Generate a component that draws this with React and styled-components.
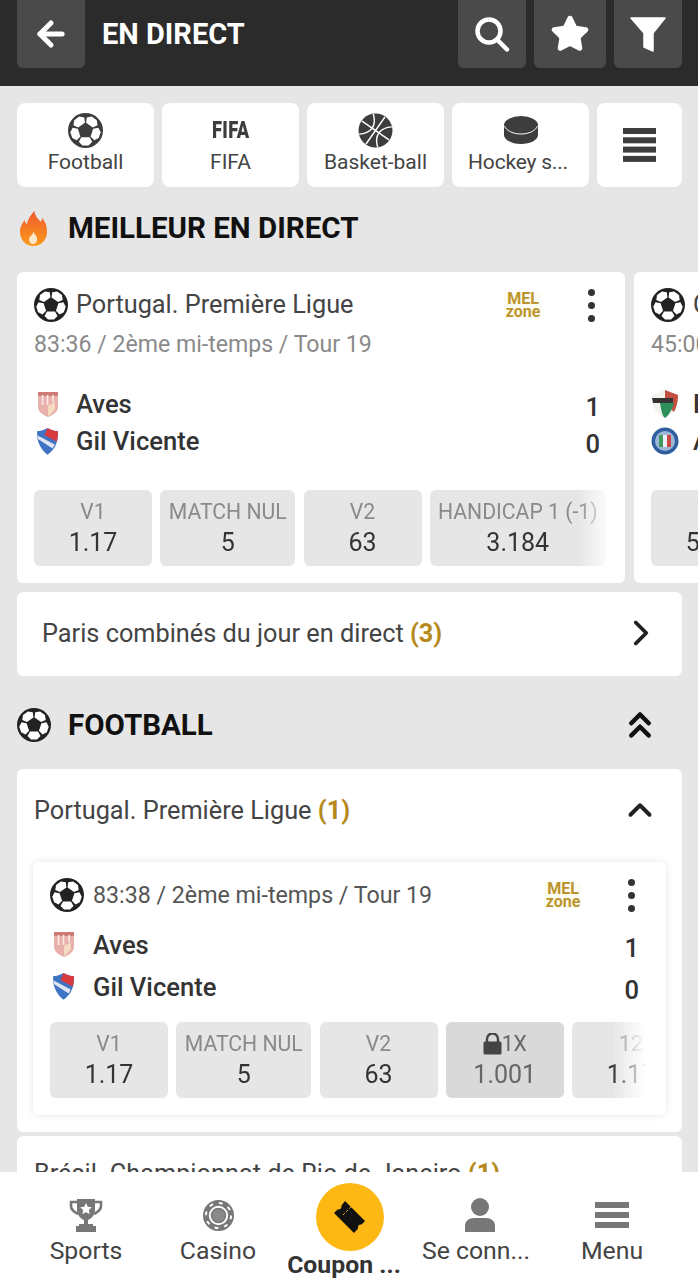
import React from 'react'
import styled, { createGlobalStyle } from 'styled-components'
import { ArrowLeft, Star, ChevronRight, ChevronUp, ChevronsUp } from 'lucide-react'

const GlobalStyle = createGlobalStyle`
	html, body {
		margin: 0;
		padding: 0;
		height: 100%;
		overflow: hidden;
		background: #e6e6e6;
		font-family: Roboto, "Liberation Sans", sans-serif;
	}
	* { box-sizing: border-box; }
`

const Page = styled.div`
	display: flex;
	flex-direction: column;
	height: 1280px;
	width: 698px;
	overflow: hidden;
`

const Header = styled.header`
	flex: none;
	height: 86px;
	background: #2b2b2b;
	display: flex;
	padding: 0 16px 18px 17px;
	gap: 8px;
	color: #fff;
`

const HeaderButton = styled.div`
	width: ${p => p.$w}px;
	height: 68px;
	background: #4a4a4a;
	border-radius: 0 0 6px 6px;
	display: flex;
	align-items: center;
	justify-content: center;
	flex: none;
`

const HeaderTitle = styled.h1`
	flex: 1;
	margin: 0 0 0 9px;
	font-size: 29px;
	font-weight: 700;
	line-height: 68px;
`

const Content = styled.main`
	flex: 1;
	min-height: 0;
	overflow: hidden;
	padding: 17px 16px 0 17px;
`

const SportTabs = styled.div`
	display: flex;
	gap: 8px;
`

const SportTab = styled.div`
	width: ${p => p.$w || 137}px;
	height: 84px;
	background: #fff;
	border-radius: 8px;
	display: flex;
	flex-direction: column;
	align-items: center;
	justify-content: ${p => p.$center ? 'center' : 'flex-start'};
	padding-top: ${p => p.$center ? 0 : 9}px;
	color: #444;
	font-size: 21px;
	flex: none;
`

const TabIcon = styled.div`
	height: 36px;
	display: flex;
	align-items: center;
	justify-content: center;
`

const TabLabel = styled.span`
	margin-top: 1px;
	line-height: 26px;
	padding-right: ${p => p.$nudge || 0}px;
	letter-spacing: ${p => p.$tight ? '-0.2px' : 'normal'};
`

const FifaMark = styled.span`
	font-size: 24px;
	font-weight: 900;
	letter-spacing: 0.5px;
	color: #3d3d3d;
	transform: scaleX(0.76);
`

const SectionRow = styled.div`
	display: flex;
	align-items: center;
	height: 34px;
	margin: ${p => p.$m};
	color: #111;
`

const SectionIcon = styled.div`
	width: 51px;
	padding-left: ${p => p.$pl || 0}px;
	display: flex;
	align-items: center;
`

const SectionTitle = styled.h2`
	flex: 1;
	margin: 0;
	font-size: 29.5px;
	font-weight: 700;
`

const CollapseIcon = styled.div`
	width: 84px;
	display: flex;
	justify-content: center;
	color: #111;
`

const Carousel = styled.div`
	display: flex;
	gap: 9px;
	margin: 27px -16px 0 0;
	overflow: hidden;
`

const LiveCard = styled.article`
	flex: none;
	width: 608px;
	height: 311px;
	background: #fff;
	border-radius: 6px;
	padding: 16px 17px;
	display: flex;
	flex-direction: column;
`

const LeagueLine = styled.div`
	display: flex;
	align-items: center;
	gap: ${p => p.$gap || 8}px;
	height: 34px;
`

const LeagueName = styled.span`
	flex: 1;
	margin-top: -2px;
	font-size: 25.3px;
	color: #444;
	white-space: nowrap;
`

const MatchTime = styled.div`
	margin-top: 8px;
	font-size: 23.1px;
	line-height: 30px;
	color: #8a8a8a;
	white-space: nowrap;
`

const MelBadge = styled.div`
	width: 38px;
	text-align: center;
	font-size: 16px;
	font-weight: 700;
	line-height: 13px;
	color: #bb952c;
	background: #fdfcf3;
	margin-right: ${p => p.$mr}px;
`

const Dots = styled.div`
	display: flex;
	flex-direction: column;
	gap: 6px;
	align-items: center;
	width: 8px;
	margin-right: ${p => p.$mr}px;
	i {
		width: 7px;
		height: 7px;
		border-radius: 50%;
		background: #333;
	}
`

const TeamRows = styled.div`
	display: flex;
	flex-direction: column;
	gap: ${p => p.$gap}px;
	margin-top: ${p => p.$top}px;
`

const TeamRow = styled.div`
	display: flex;
	align-items: center;
	height: ${p => p.$h}px;
	font-size: 25.6px;
	font-weight: 500;
	color: #333;
`

const Crest = styled.div`
	width: ${p => p.$w}px;
	padding-left: ${p => p.$pl ?? 2}px;
	display: flex;
	align-items: center;
`

const TeamName = styled.span`
	flex: 1;
	white-space: nowrap;
`

const Score = styled.span`
	position: relative;
	top: 3px;
	margin-right: ${p => p.$mr}px;
`

const OddsRow = styled.div`
	display: flex;
	gap: 8.25px;
	margin-top: ${p => p.$top}px;
	margin-right: ${p => p.$mr}px;
	overflow: hidden;
	-webkit-mask-image: linear-gradient(to right, #000 calc(100% - 34px), transparent);
	mask-image: linear-gradient(to right, #000 calc(100% - 34px), transparent);
`

const OddBox = styled.div`
	flex: none;
	width: ${p => p.$w}px;
	height: 76px;
	border-radius: 6px;
	background: ${p => p.$locked ? '#d9d9d9' : '#e6e6e6'};
	display: flex;
	flex-direction: column;
	align-items: center;
	justify-content: center;
	padding-bottom: 2px;
	white-space: nowrap;
`

const OddLabel = styled.span`
	display: flex;
	align-items: center;
	font-size: 21.2px;
	line-height: 30px;
	color: ${p => p.$locked ? '#666' : '#8a8a8a'};
`

const OddValue = styled.span`
	font-size: 25px;
	line-height: 31px;
	color: ${p => p.$locked ? '#666' : '#333'};
`

const LinkRow = styled.div`
	display: flex;
	align-items: center;
	justify-content: space-between;
	height: 84px;
	margin-top: 9px;
	padding: 0 20px 2px 25px;
	background: #fff;
	border-radius: 6px;
	font-size: 25.3px;
	color: #444;
`

const Count = styled.b`
	color: #b5891a;
	font-weight: 700;
`

const LeaguePanel = styled.section`
	margin-top: 27px;
	height: 363px;
	background: #fff;
	border-radius: 6px;
	padding: 0 16px;
`

const LeagueHead = styled.div`
	display: flex;
	align-items: center;
	justify-content: space-between;
	height: 82px;
	padding: 0 7px 0 1px;
	font-size: 25.3px;
	color: #444;
`

const MatchCard = styled.article`
	height: 253px;
	margin-top: 11px;
	border-radius: 6px;
	background: #fff;
	box-shadow: 0 0 8px rgba(0, 0, 0, 0.1);
	padding: 16px 17px;
`

const MatchClock = styled.span`
	flex: 1;
	font-size: 23.2px;
	color: #555;
	white-space: nowrap;
`

const NextPanel = styled.section`
	margin-top: 4px;
	height: 120px;
	background: #fff;
	border-radius: 6px;
	padding: 23px 17px;
	font-size: 25.3px;
	color: #444;
	white-space: nowrap;
`

const BottomNav = styled.nav`
	flex: none;
	height: 108px;
	background: #fff;
	display: flex;
	padding: 0 12px;
`

const NavItem = styled.div`
	flex: none;
	width: ${p => p.$w}px;
	display: flex;
	flex-direction: column;
	align-items: center;
	padding-top: 25px;
	font-size: 24.8px;
	color: #444;
	white-space: nowrap;
`

const NavIcon = styled.div`
	height: 36px;
	display: flex;
	align-items: center;
	justify-content: center;
`

const NavLabel = styled.span`
	margin-top: 0;
	line-height: 36px;
	padding-right: ${p => p.$nudge || 0}px;
`

const CouponItem = styled(NavItem)`
	padding-top: 11px;
	color: #333;
	font-weight: 700;
`

const CouponCircle = styled.div`
	width: 68px;
	height: 68px;
	border-radius: 50%;
	background: #fdb813;
	display: flex;
	align-items: center;
	justify-content: center;
`

const CouponLabel = styled.span`
	line-height: 30px;
	margin-top: -1px;
	padding-right: 12px;
`

// one white panel of the ball, turned five times round the centre
const ballPatch = 'M13 23.500h8l2.500 4.500-3.500 3.500h-6L10.500 28z'

const Ball = ({ size = 34, fill = '#222' }) => (
	<svg width={size} height={size} viewBox="0 0 34 34" style={{ flex: 'none' }}>
		<circle cx="17" cy="17" r="17" fill={fill} />
		{[0, 72, 144, 216, 288].map(turn => (
			<path key={turn} d={ballPatch} fill="#fff" transform={`rotate(${turn} 17 17)`} />
		))}
	</svg>
)

const Basketball = () => (
	<svg width="35" height="35" viewBox="0 0 34 34" fill="none">
		<circle cx="17" cy="17" r="16.5" fill="#3d3d3d" />
		<path d="M1 17h32M17 1v32M6 5c5 4 7 8 7 12s-3 9-7 12M28 5c-5 4-7 8-7 12s3 9 7 12" stroke="#fff" strokeWidth="1.4" transform="rotate(35 17 17)" />
	</svg>
)

const Puck = () => (
	<svg width="34" height="28" viewBox="0 0 34 28">
		<path d="M0 9v10c0 5 8 9 17 9s17-4 17-9V9z" fill="#3d3d3d" />
		<ellipse cx="17" cy="9" rx="17" ry="9" fill="#3d3d3d" />
		<path d="M.5 10c2 5 9 8 16.500 8s14.500-3 16.500-8" fill="none" stroke="#fff" strokeWidth="1" />
	</svg>
)

const Bars = ({ count, width, height, gap, color }) => (
	<svg width={width} height={count * height + (count - 1) * gap}>
		{Array.from({ length: count }, (_, i) => (
			<rect key={i} y={i * (height + gap)} width={width} height={height} fill={color} />
		))}
	</svg>
)

const Flame = () => (
	<svg width="27" height="35" viewBox="0 0 30 36" preserveAspectRatio="none">
		<defs>
			<linearGradient id="flameFill" x1="0" y1="0" x2="0" y2="1">
				<stop offset="0" stopColor="#ef5a2c" />
				<stop offset="1" stopColor="#fb9a1c" />
			</linearGradient>
		</defs>
		<path d="M16 0c1 6 4 8 7 11 1-1 1.500-2 1.500-4C28 11 30 15 30 21c0 9-6.500 15-15 15S0 30 0 21c0-5 3-8 5-12 .5 2 1 3.500 2.500 4.500C9 8 12 4 16 0z" fill="url(#flameFill)" />
		<path d="M15 21c1 3 4 4 4 8 0 3-2 5-4.500 5S10 32 10 29c0-3 4-4 5-8z" fill="#fde9c8" />
	</svg>
)

const SearchGlyph = () => (
	<svg width="36" height="38" viewBox="0 0 36 38" fill="none" stroke="#fff">
		<circle cx="15" cy="16" r="11.500" strokeWidth="4.500" />
		<path d="M23.500 25 33 34.500" strokeWidth="4.500" strokeLinecap="round" />
	</svg>
)

const FunnelGlyph = () => (
	<svg width="36" height="36" viewBox="0 0 36 36">
		<path d="M1 2h34L23 17v18l-9-4V17z" fill="#fff" stroke="#fff" strokeWidth="1.500" strokeLinejoin="round" />
	</svg>
)

// club crests, small and soft at this size
const AvesCrest = ({ w = 24 }) => (
	<svg width={w} height={w * 1.12} viewBox="0 0 24 27">
		<path d="M2 1h20v15c0 5-5 8-10 10C7 24 2 21 2 16z" fill="#e9b0ab" />
		<path d="M2 1h20v4H2z" fill="#d07a75" />
		<path d="M6.500 4v10M11.500 4v10M17 4v7" stroke="#fbe9e6" strokeWidth="1.700" />
		<path d="M12 15l7-4v7c-2 3-4 5-7 7z" fill="#f5dcc0" />
	</svg>
)

const GilCrest = ({ w = 25 }) => (
	<svg width={w} height={w * 1.15} viewBox="0 0 24 28">
		<path d="M2 4c3 0 7-1 10-3 3 2 7 3 10 3 1 9-2 18-10 23C5 22 1 13 2 4z" fill="#3f74c4" />
		<path d="M12 1c3 2 7 3 10 3 .4 4 0 7-1 10L9 8z" fill="#d93a3f" />
		<path d="M2 8l17 9-2 4L3 12z" fill="#dfe6f2" />
	</svg>
)

const ClubCrest = ({ tone, w = 28 }) => (
	<svg width={w} height={tone === 'green' ? 30 : w} viewBox={tone === 'green' ? '0 0 28 30' : '0 0 28 28'}>
		{tone === 'green' ? (
			<>
				<path d="M1 6l13-5 13 5c0 12-4 19-13 23C5 25 1 18 1 6z" fill="#f1f3ef" />
				<path d="M14 1l13 5c0 8-2 13-4 17l-9-8z" fill="#c24f3f" />
				<path d="M9 14h14c-2 7-5 12-9 15-3-2-4-9-5-15z" fill="#2f8f5b" />
				<path d="M1 9h21v5H2z" fill="#333" />
			</>
		) : (
			<>
				<circle cx="14" cy="14" r="13.500" fill="#2f5f9f" />
				<circle cx="14" cy="14" r="10" fill="#9db7d8" />
				<path d="M8 8h4v12H8z" fill="#3c9a5a" />
				<path d="M12 8h4v12h-4z" fill="#eef" />
				<path d="M16 8h4v12h-4z" fill="#c94a43" />
			</>
		)}
	</svg>
)

const Trophy = () => (
	<svg width="34" height="34" viewBox="0 0 34 34">
		<path d="M8 1h18v11c0 5-4 9-7 10v4h5v2h3v6H7v-6h3v-2h5v-4c-3-1-7-5-7-10z" fill="#777" />
		<path d="M8 4H2v4c0 4 3 6 7 8M26 4h6v4c0 4-3 6-7 8" fill="none" stroke="#777" strokeWidth="2.600" />
		<path d="M17 5l1.800 3.700 4 .6-2.900 2.800.7 4-3.600-1.900-3.600 1.900.7-4-2.900-2.800 4-.6z" fill="#fff" />
	</svg>
)

const Chip = () => (
	<svg width="31" height="31" viewBox="0 0 32 32">
		<circle cx="16" cy="16" r="16" fill="#777" />
		<circle cx="16" cy="16" r="13" fill="none" stroke="#fff" strokeWidth="2" strokeDasharray="4 6.210" />
		<circle cx="16" cy="16" r="9" fill="none" stroke="#fff" strokeWidth="2" />
		<circle cx="16" cy="16" r="6.500" fill="#8a8a8a" />
	</svg>
)

const Ticket = () => (
	<svg width="32" height="32" viewBox="0 0 32 32">
		<path d="M11 0 31 20 27.500 23.500C25 23 23.500 25 24 27.500L20 32 0 12 3.500 8.500C6 9 8 7 7.500 4.500z" fill="#111" />
		<path d="M9 14l8-8" stroke="#fdb813" strokeWidth="1" strokeDasharray="2.500 2" />
	</svg>
)

const Person = () => (
	<svg width="30" height="34" viewBox="0 0 30 34">
		<ellipse cx="15" cy="9" rx="9" ry="9" fill="#777" />
		<path d="M0 34v-6c0-5 4-8 9-8h12c5 0 9 3 9 8v6z" fill="#777" />
	</svg>
)

const LockIcon = () => (
	<svg width="19" height="22" viewBox="0 0 19 22">
		<path d="M4 9V6a5.500 5.500 0 0 1 11 0v3" fill="none" stroke="#444" strokeWidth="2.400" />
		<rect x="0.500" y="8.500" width="18" height="13" rx="1.500" fill="#444" />
	</svg>
)

const liveOdds = [
	{ w: 118, label: 'V1', value: '1.17' },
	{ w: 135, label: 'MATCH NUL', value: '5' },
	{ w: 118, label: 'V2', value: '63' },
	{ w: 176, label: 'HANDICAP 1 (-1)', value: '3.184' },
]

const panelOdds = [
	{ w: 118, label: 'V1', value: '1.17' },
	{ w: 135, label: 'MATCH NUL', value: '5' },
	{ w: 118, label: 'V2', value: '63' },
	{ w: 118, label: '1X', value: '1.001', locked: true },
	{ w: 118, label: '12', value: '1.17' },
]

const Odds = ({ items }) => items.map(odd => (
	<OddBox key={odd.label} $w={odd.w} $locked={odd.locked}>
		<OddLabel $locked={odd.locked}>{odd.locked && <LockIcon />}{odd.label}</OddLabel>
		<OddValue $locked={odd.locked}>{odd.value}</OddValue>
	</OddBox>
))

class App extends React.Component {
	render() {
		return (
		<Page>
			<GlobalStyle />
			<Header>
				<HeaderButton $w={68}><ArrowLeft size={38} strokeWidth={3.2} /></HeaderButton>
				<HeaderTitle>EN DIRECT</HeaderTitle>
				<HeaderButton $w={68}><SearchGlyph /></HeaderButton>
				<HeaderButton $w={72}><Star size={40} fill="#fff" strokeWidth={2} /></HeaderButton>
				<HeaderButton $w={68}><FunnelGlyph /></HeaderButton>
			</Header>

			<Content>
				<SportTabs>
					<SportTab>
						<TabIcon><Ball size={35} fill="#3d3d3d" /></TabIcon>
						<TabLabel>Football</TabLabel>
					</SportTab>
					<SportTab>
						<TabIcon><FifaMark>FIFA</FifaMark></TabIcon>
						<TabLabel>FIFA</TabLabel>
					</SportTab>
					<SportTab>
						<TabIcon><Basketball /></TabIcon>
						<TabLabel>Basket-ball</TabLabel>
					</SportTab>
					<SportTab>
						<TabIcon><Puck /></TabIcon>
						<TabLabel $nudge={5} $tight>Hockey s...</TabLabel>
					</SportTab>
					<SportTab $w={85} $center>
						<Bars count={4} width={33} height={6} gap={3.300} color="#3d3d3d" />
					</SportTab>
				</SportTabs>

				<SectionRow $m="24px 0 0">
					<SectionIcon $pl={3}><Flame /></SectionIcon>
					<SectionTitle>MEILLEUR EN DIRECT</SectionTitle>
				</SectionRow>

				<Carousel>
					<LiveCard>
						<LeagueLine>
							<Ball />
							<LeagueName>Portugal. Première Ligue</LeagueName>
							<MelBadge $mr={37}>MEL<br />zone</MelBadge>
							<Dots $mr={13}><i /><i /><i /></Dots>
						</LeagueLine>
						<MatchTime>83:36 / 2ème mi-temps / Tour 19</MatchTime>
						<TeamRows $top={26} $gap={1}>
							<TeamRow $h={36}><Crest $w={42}><AvesCrest /></Crest><TeamName>Aves</TeamName><Score $mr={8}>1</Score></TeamRow>
							<TeamRow $h={36}><Crest $w={42} $pl={1}><GilCrest /></Crest><TeamName>Gil Vicente</TeamName><Score $mr={8}>0</Score></TeamRow>
						</TeamRows>
						<OddsRow $top={31} $mr={-4}><Odds items={liveOdds} /></OddsRow>
					</LiveCard>
					<LiveCard>
						<LeagueLine>
							<Ball />
							<LeagueName>Chili. Première Division</LeagueName>
						</LeagueLine>
						<MatchTime>45:00 / Mi-temps</MatchTime>
						<TeamRows $top={26} $gap={1}>
							<TeamRow $h={36}><Crest $w={42} $pl={0}><ClubCrest tone="green" /></Crest><TeamName>Palestino</TeamName></TeamRow>
							<TeamRow $h={36}><Crest $w={42} $pl={0}><ClubCrest tone="blue" /></Crest><TeamName>Audax</TeamName></TeamRow>
						</TeamRows>
						<OddsRow $top={31} $mr={0}>
							<OddBox $w={118}><OddLabel>V1</OddLabel><OddValue>5.25</OddValue></OddBox>
						</OddsRow>
					</LiveCard>
				</Carousel>

				<LinkRow>
					<span>Paris combinés du jour en direct <Count>(3)</Count></span>
					<ChevronRight size={42} strokeWidth={2.2} color="#222" />
				</LinkRow>

				<SectionRow $m="32px 0 0">
					<SectionIcon><Ball /></SectionIcon>
					<SectionTitle>FOOTBALL</SectionTitle>
					<CollapseIcon><ChevronsUp size={42} strokeWidth={2.6} /></CollapseIcon>
				</SectionRow>

				<LeaguePanel>
					<LeagueHead>
						<span>Portugal. Première Ligue <Count>(1)</Count></span>
						<ChevronUp size={38} strokeWidth={2.5} color="#222" />
					</LeagueHead>
					<MatchCard>
						<LeagueLine $gap={9}>
							<Ball />
							<MatchClock>83:38 / 2ème mi-temps / Tour 19</MatchClock>
							<MelBadge $mr={36}>MEL<br />zone</MelBadge>
							<Dots $mr={14}><i /><i /><i /></Dots>
						</LeagueLine>
						<TeamRows $top={14} $gap={5}>
							<TeamRow $h={37}><Crest $w={43}><AvesCrest /></Crest><TeamName>Aves</TeamName><Score $mr={10}>1</Score></TeamRow>
							<TeamRow $h={37}><Crest $w={43} $pl={1}><GilCrest /></Crest><TeamName>Gil Vicente</TeamName><Score $mr={10}>0</Score></TeamRow>
						</TeamRows>
						<OddsRow $top={17} $mr={3}><Odds items={panelOdds} /></OddsRow>
					</MatchCard>
				</LeaguePanel>

				<NextPanel>Brésil. Championnat de Rio de Janeiro <Count>(1)</Count></NextPanel>
			</Content>

			<BottomNav>
				<NavItem $w={148}><NavIcon><Trophy /></NavIcon><NavLabel>Sports</NavLabel></NavItem>
				<NavItem $w={116}><NavIcon><Chip /></NavIcon><NavLabel>Casino</NavLabel></NavItem>
				<CouponItem $w={148}>
					<CouponCircle><Ticket /></CouponCircle>
					<CouponLabel>Coupon ...</CouponLabel>
				</CouponItem>
				<NavItem $w={112}><NavIcon><Person /></NavIcon><NavLabel $nudge={8}>Se conn...</NavLabel></NavItem>
				<NavItem $w={152}><NavIcon><Bars count={3} width={34} height={6} gap={4} color="#777" /></NavIcon><NavLabel>Menu</NavLabel></NavItem>
			</BottomNav>
		</Page>
		)
	}
}

export default App
